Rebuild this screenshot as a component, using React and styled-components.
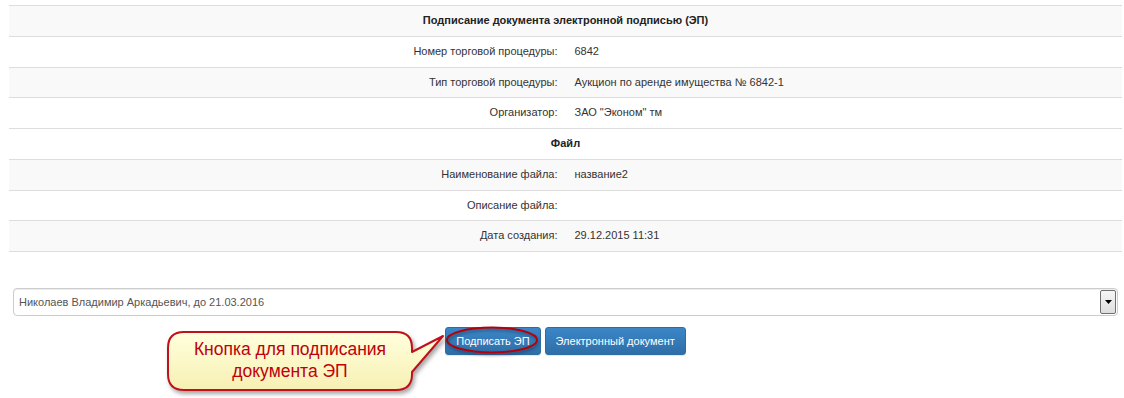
import React from 'react';
import styled, { createGlobalStyle } from 'styled-components';

const GlobalStyle = createGlobalStyle`
  html, body {
    margin: 0;
    padding: 0;
    background: #fff;
  }
  body {
    font-family: "Liberation Sans", Arial, sans-serif;
    font-size: 11px;
    color: #333;
  }
`;

const rows_info = [
  { label: 'Номер торговой процедуры:', value: '6842' },
  { label: 'Тип торговой процедуры:', value: 'Аукцион по аренде имущества № 6842-1' },
  { label: 'Организатор:', value: 'ЗАО "Эконом" тм' },
];

const rows_file = [
  { label: 'Наименование файла:', value: 'название2' },
  { label: 'Описание файла:', value: '' },
  { label: 'Дата создания:', value: '29.12.2015 11:31' },
];

const App = () => {
  return (
    <Page>
      <GlobalStyle />
      <Table>
        <tbody>
          <Row striped>
            <Head colSpan={2}>Подписание документа электронной подписью (ЭП)</Head>
          </Row>
          {rows_info.map((r, i) => (
            <Row key={r.label} striped={i % 2 === 1}>
              <Label>{r.label}</Label>
              <Value>{r.value}</Value>
            </Row>
          ))}
          <Row>
            <Head colSpan={2}>Файл</Head>
          </Row>
          {rows_file.map((r, i) => (
            <Row key={r.label} striped={i % 2 === 0}>
              <Label>{r.label}</Label>
              <Value>{r.value}</Value>
            </Row>
          ))}
        </tbody>
      </Table>

      <Select>
        <SelectText>Николаев Владимир Аркадьевич, до 21.03.2016</SelectText>
        <ArrowBox>
          <svg width='7' height='4' viewBox='0 0 7 4'>
            <path d='M0 0 H7 L3.5 4 Z' fill='#000' />
          </svg>
        </ArrowBox>
      </Select>

      <Actions>
        <Marked>
          <Button>Подписать ЭП</Button>
          <Ring viewBox='0 0 100 32' preserveAspectRatio='none'>
            <ellipse cx='50' cy='16' rx='47' ry='12.5' fill='none' stroke='#b5000c' strokeWidth='2' />
          </Ring>
        </Marked>
        <Button>Электронный документ</Button>
      </Actions>

      <Callout>
        <svg width='300' height='75' viewBox='0 0 300 75'>
          <defs>
            <linearGradient id='bubble' x1='0' y1='0' x2='0' y2='1'>
              <stop offset='0' stopColor='#ffffdc' />
              <stop offset='1' stopColor='#f7f0b4' />
            </linearGradient>
          </defs>
          <path
            d='M24 7 H236 Q252 7 252 23 V27 L283 11 L252 47 V49 Q252 65 236 65 H24 Q8 65 8 49 V23 Q8 7 24 7 Z'
            fill='url(#bubble)'
            stroke='#c0111b'
            strokeWidth='2'
            strokeLinejoin='round'
          />
        </svg>
        <CalloutText>
          Кнопка для подписания
          <br />
          документа ЭП
        </CalloutText>
      </Callout>
    </Page>
  );
};

export default App;

const Page = styled.div`
  position: relative;
  width: 1124px;
  height: 398px;
  box-sizing: border-box;
  padding: 5px 2px 0 9px;
  overflow: hidden;
`;

const Table = styled.table`
  width: 100%;
  border-collapse: collapse;
  table-layout: fixed;
  border-bottom: 1px solid #ddd;
`;

const Row = styled.tr`
  background: ${(p) => (p.striped ? '#f9f9f9' : '#fff')};
  td {
    border-top: 1px solid #ddd;
  }
`;

const Head = styled.td`
  text-align: center;
  font-weight: bold;
  color: #222;
  padding: 6px 8px;
  line-height: 17.75px;
`;

const Label = styled.td`
  width: 50%;
  text-align: right;
  padding: 6px 8px;
  line-height: 17.75px;
  color: #333;
`;

const Value = styled.td`
  text-align: left;
  padding: 6px 9px;
  line-height: 17.75px;
  color: #333;
`;

const Select = styled.div`
  display: flex;
  align-items: center;
  justify-content: space-between;
  height: 28px;
  box-sizing: border-box;
  margin: 36px 4px 0 4px;
  border: 1px solid #ccc;
  border-radius: 4px;
  box-shadow: inset 0 1px 1px rgba(0, 0, 0, 0.075);
  background: #fff;
  padding: 0 0 0 5px;
`;

const SelectText = styled.span`
  color: #555;
  font-size: 11px;
`;

const ArrowBox = styled.div`
  display: flex;
  align-items: center;
  justify-content: center;
  width: 16px;
  height: 24px;
  box-sizing: border-box;
  margin-right: 1px;
  border: 1px solid #707070;
  border-radius: 2px;
  background: linear-gradient(#f6f6f6, #dedede);
`;

const Actions = styled.div`
  display: flex;
  justify-content: center;
  gap: 4px;
  margin-top: 11px;
`;

const Marked = styled.span`
  position: relative;
  display: inline-flex;
`;

const Ring = styled.svg`
  position: absolute;
  left: -1px;
  top: -3px;
  width: 96px;
  height: 32px;
  pointer-events: none;
  filter: drop-shadow(1px 2px 1.5px rgba(0, 0, 0, 0.35));
`;

const Button = styled.button`
  height: 28px;
  padding: 0 10px;
  font-family: "Liberation Sans", Arial, sans-serif;
  font-size: 11px;
  color: #fff;
  border: 1px solid #2e6da4;
  border-radius: 3px;
  background: linear-gradient(#3b86c6, #2f6ea8);
  box-shadow: 0 1px 1px rgba(0, 0, 0, 0.1);
`;

const Callout = styled.div`
  position: absolute;
  left: 160px;
  top: 325px;
  width: 300px;
  height: 75px;
  svg {
    display: block;
    filter: drop-shadow(2px 3px 2px rgba(0, 0, 0, 0.35));
  }
`;

const CalloutText = styled.div`
  position: absolute;
  left: 8px;
  top: 13px;
  width: 244px;
  text-align: center;
  font-family: "Liberation Sans", Arial, sans-serif;
  font-size: 17.5px;
  line-height: 22px;
  color: #c0000b;
`;
